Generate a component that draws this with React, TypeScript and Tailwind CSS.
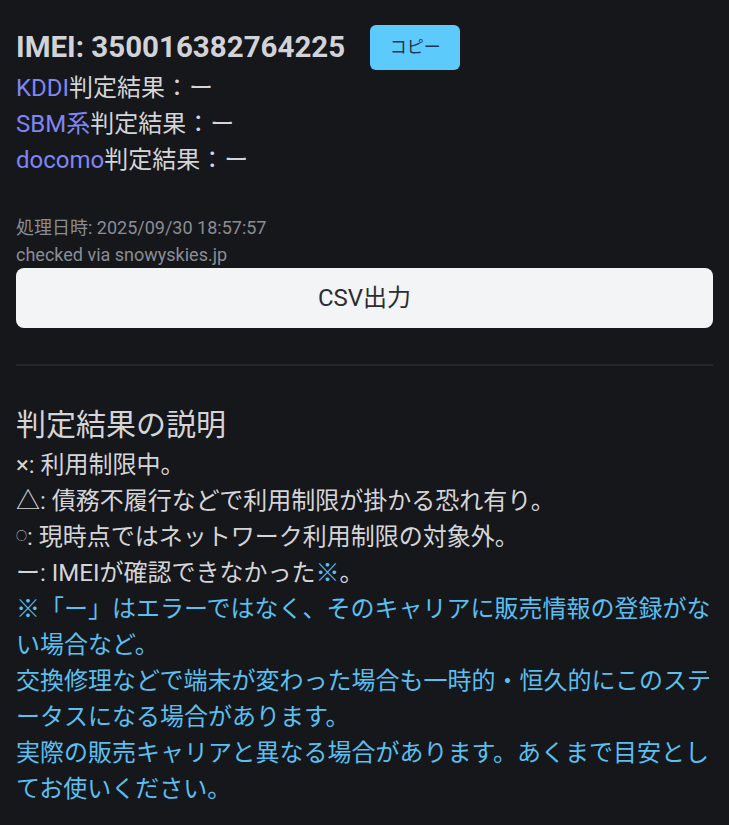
import React from "react";

export default function App() {
  const font = { fontFamily: 'Roboto, "Noto Sans CJK JP", sans-serif' };
  return (
    <div className="min-h-screen w-full bg-[#16171b] text-[#d4d5d9]" style={font}>
      <div className="px-4 pt-[25px] pb-4">
        <div className="flex items-center gap-[25px]">
          <h1 className="text-[29.5px] font-bold leading-[45px] text-[#d1d3d8]">IMEI: 350016382764225</h1>
          <button className="h-[45px] w-[90px] rounded-md bg-[#5ccbfb] text-[17px] text-[#1d3557]">コピー</button>
        </div>
        <div className="text-[24px] leading-[36px]">
          <div><span className="text-[#7f86f3]">KDDI</span>判定結果：ー</div>
          <div><span className="text-[#7f86f3]">SBM系</span>判定結果：ー</div>
          <div><span className="text-[#7f86f3]">docomo</span>判定結果：ー</div>
        </div>
        <div className="mt-[36px] text-[18px] leading-[27px] text-[#8a8d95]">
          <div>処理日時: 2025/09/30 18:57:57</div>
          <div>checked via snowyskies.jp</div>
        </div>
        <button className="mt-0 flex h-[60px] w-full items-center justify-center rounded-lg bg-[#f3f4f6] text-[24px] text-[#2a2d33]">CSV出力</button>
        <div className="mt-[36px] h-[2px] w-full bg-[#26272c]" />
        <div className="mt-[36px]">
          <h2 className="text-[30px] leading-[45px] text-[#d4d5d9]">判定結果の説明</h2>
          <div className="text-[24px] leading-[36px]">
            <div className="h-[36px]">×: 利用制限中。</div>
            <div className="h-[36px]">△: 債務不履行などで利用制限が掛かる恐れ有り。</div>
            <div className="h-[36px]"><span className="inline-block align-[5px] text-[11px] leading-none">○</span>: 現時点ではネットワーク利用制限の対象外。</div>
            <div className="h-[36px]">ー: IMEIが確認できなかった<span className="text-[#5bbfef]">※</span>。</div>
            <div className="text-[#5bbfef]">
              ※「ー」はエラーではなく、そのキャリアに販売情報の登録がな<br />い場合など。
            </div>
            <div className="text-[#5bbfef]">
              交換修理などで端末が変わった場合も一時的・恒久的にこのステ<br />ータスになる場合があります。
            </div>
            <div className="text-[#5bbfef]">
              実際の販売キャリアと異なる場合があります。あくまで目安とし<br />てお使いください。
            </div>
          </div>
        </div>
      </div>
    </div>
  );
}
